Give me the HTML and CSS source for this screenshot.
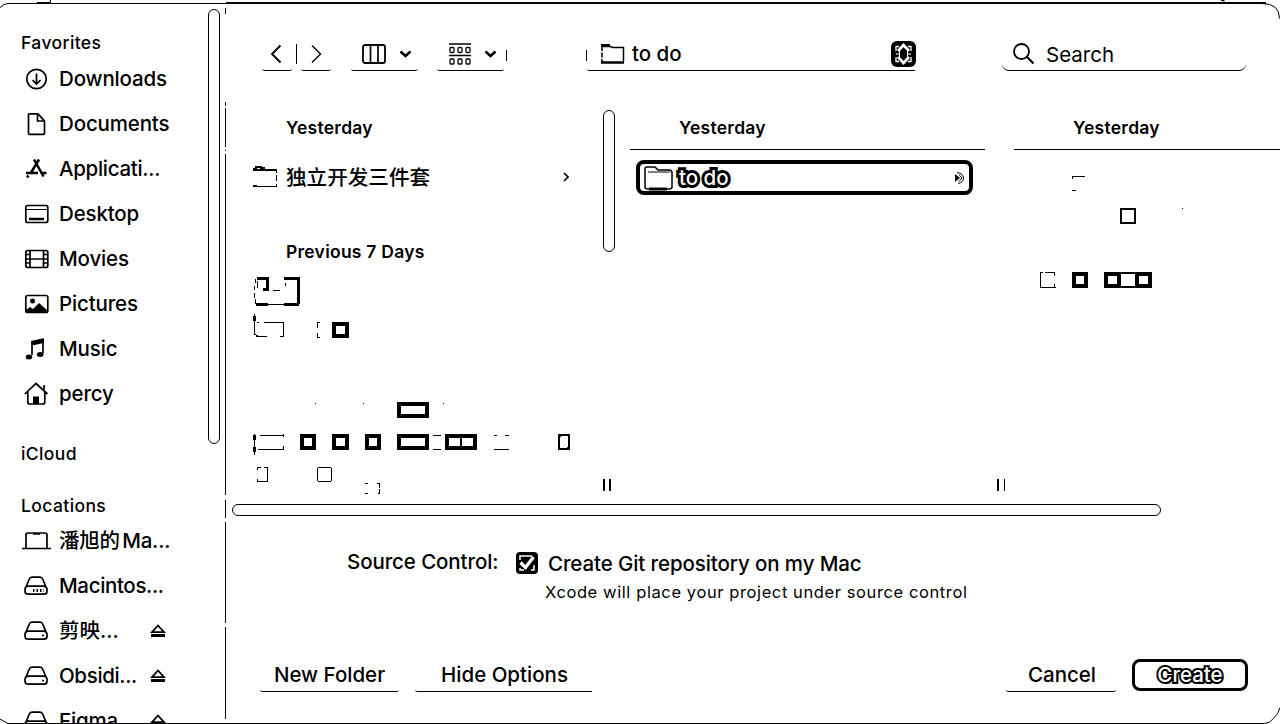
FILE: index.html
```html
<!DOCTYPE html>
<html lang="en">
<head>
<meta charset="utf-8">
<title>Save</title>
<link rel="stylesheet" href="styles.css">
</head>
<body>
<svg class="defs" aria-hidden="true">
  <symbol id="drive" viewBox="0 0 24 20"><path d="M5.2 3.2Q6 1.2 8 1.2h8q2 0 2.8 2l3.4 8.3M5.2 3.2L1.800 11.500M4 10.200h16q3 .4 3 3.600v1.400q0 3-3 3H4q-3 0-3-3v-1.400q0-3.200 3-3.600z"/></symbol>
  <symbol id="eject" viewBox="0 0 16 14"><path d="M2 8.200L8 1.500l6 6.700z" stroke-width="1.800"/><path d="M1 11.500h14" stroke-width="3"/></symbol>
  <symbol id="down" viewBox="0 0 13 8"><path d="M1.500 1.500l5 4.500 5-4.500" stroke-width="2.500"/></symbol>
</svg>
<div class="window">
  <aside class="sidebar">
    <nav class="places">
      <h2 class="heading favorites">Favorites</h2>
      <div class="place"><svg class="icon" viewBox="0 0 24 24"><circle cx="12.500" cy="12" r="9.700"/><path d="M12.500 6.500v10.500M8.500 13l4 4 4-4"/></svg><span class="name">Downloads</span></div>
      <div class="place"><svg class="icon" viewBox="0 0 24 24"><path d="M6 1.800h8l6.500 7v12.500q0 1-1 1h-14q-1 0-1-1V2.800q0-1 1.500-1zM13.500 2v7h7"/></svg><span class="name documents">Documents</span></div>
      <div class="place"><svg class="icon" viewBox="0 0 24 24"><path d="M10 2.500l2 3.500M15 2.500L6.500 16.500M12 6l7.500 13.500M2 16h12M17 16h5.500M4.500 18.500l-1.500 2" stroke-width="2.500"/></svg><span class="name applications">Applicati...</span></div>
      <div class="place"><svg class="icon" viewBox="0 0 24 24"><rect x="1.800" y="3.500" width="22" height="17" rx="2"/><path d="M2 7.500h21" stroke-width="1"/><path d="M5 17h15" stroke-width="2.500"/></svg><span class="name">Desktop</span></div>
      <div class="place"><svg class="icon" viewBox="0 0 24 24"><rect x="1.800" y="3.500" width="22" height="17" rx="2"/><path d="M6 4v16M19.500 4v16M6 12h13.500M2 7.500h4M2 12h4M2 16h4M19.500 7.500h4M19.500 12h4M19.500 16h4"/></svg><span class="name">Movies</span></div>
      <div class="place"><svg class="icon" viewBox="0 0 24 24"><rect x="1.800" y="3.500" width="22" height="17" rx="2"/><path class="solid" d="M2 18l4-3 3 2 6-6 8 7v3H2z"/><circle class="solid" cx="8.500" cy="9" r="2.500"/></svg><span class="name">Pictures</span></div>
      <div class="place"><svg class="icon" viewBox="0 0 24 24"><path d="M8 18V5l11-2.500V16"/><path class="solid" d="M7.200 4l12.600-2.800V6L8 8.500z"/><ellipse class="solid" cx="5" cy="20" rx="3.300" ry="2.500"/><ellipse class="solid" cx="16.200" cy="17.500" rx="3.300" ry="2.500"/></svg><span class="name">Music</span></div>
      <div class="place"><svg class="icon" viewBox="0 0 24 24"><path d="M.800 12L12 1.500 23.500 12M3.800 10v10q0 2 2 2h13q2 0 2-2V10M20 3v6"/><path class="solid" d="M9 22v-7.500h6V22z"/></svg><span class="name percy">percy</span></div>
      <h2 class="heading cloud">iCloud</h2>
      <h2 class="heading locations">Locations</h2>
      <div class="place"><svg class="icon laptop" viewBox="0 0 28 20"><path d="M4 17V4q0-2 2-2h17q2 0 2 2v13M0 17.500h29M11 3h7"/></svg><span class="name mac">潘旭的 Ma...</span></div>
      <div class="place"><svg class="icon drive"><use href="#drive"/><path d="M9 14.500h11" stroke-dasharray="1.500 2" stroke-width="3"/></svg><span class="name macintosh">Macintos...</span></div>
      <div class="place"><svg class="icon drive"><use href="#drive"/><path d="M18 14.500h2"/></svg><span class="name cjk">剪映...</span><svg class="eject"><use href="#eject"/></svg></div>
      <div class="place"><svg class="icon drive"><use href="#drive"/><path d="M18 14.500h2"/></svg><span class="name obsidian">Obsidi...</span><svg class="eject"><use href="#eject"/></svg></div>
      <div class="place"><svg class="icon drive"><use href="#drive"/></svg><span class="name">Figma</span><svg class="eject"><use href="#eject"/></svg></div>
    </nav>
    <div class="side-scroll"></div>
    <svg class="divider" width="1" height="724"><path d="M.5 8v6M.5 102v4M.5 108v39M.5 150v1M.5 154v341M.5 500v18M.5 522v101M.5 627v92"/></svg>
  </aside>
  <main class="main">
    <header class="toolbar">
      <div class="tool back"><svg width="12" height="20" viewBox="0 0 12 20"><path d="M10.500 1.500L2 10l8.500 8.500" stroke-width="1.900"/></svg></div>
      <i class="bar"></i>
      <div class="tool forward"><svg width="12" height="20" viewBox="0 0 12 20"><path d="M2 1.500l8.500 8.500L2 18.500" stroke-width="1.400"/></svg></div>
      <div class="tool view"><svg width="24" height="20" viewBox="0 0 24 20"><rect x="1" y="1" width="22" height="18" rx="2" stroke-width="1.800"/><path d="M8.500 1v18M16 1v18" stroke-width="1.700"/></svg><svg width="13" height="8"><use href="#down"/></svg></div>
      <div class="tool group"><svg width="22" height="22" viewBox="0 0 22 22"><path d="M0 1h22M0 12.500h22" stroke-width="1.700"/><g stroke-width="1.300"><rect x="1" y="4.500" width="4" height="5" rx="1"/><rect x="9" y="4.500" width="4" height="5" rx="1"/><rect x="17" y="4.500" width="4" height="5" rx="1"/><rect x="1" y="16" width="4" height="5" rx="1"/><rect x="9" y="16" width="4" height="5" rx="1"/><rect x="17" y="16" width="4" height="5" rx="1"/></g></svg><svg width="13" height="8"><use href="#down"/></svg></div>
      <i class="tick"></i>
      <i class="tick path-tick"></i>
      <div class="tool path"><svg width="24" height="22" viewBox="0 0 24 22"><path d="M1 3.500h8l3 1h10.500v14" stroke-width="1.500"/><path d="M0 2.500h9" stroke-width="3"/><path d="M1 4v4M1 9.500v5M1 16v3" stroke-width="1.500"/><path d="M0 19.500h23" stroke-width="2.500"/></svg><span class="path-name">to do</span><svg class="stepper" width="25" height="26" viewBox="0 0 25 26"><rect width="25" height="26" rx="6" class="solid"/><path class="white" d="M5 10V5.500h3M17 5.500h3V10M5 16v4.500h3M17 20.500h3V16" stroke-width="1.300"/><path class="white" d="M7 10l5.500-6 5.500 6M7 16l5.500 6 5.500-6" stroke-width="2.700"/><path class="white" d="M5 13h3M17 13h3M8.500 10v6M16.500 10v6" stroke-width="1"/></svg></div>
      <div class="tool search"><svg width="22" height="22" viewBox="0 0 22 22"><circle cx="8.500" cy="8.500" r="7.500" stroke-width="1.800"/><path d="M14 14l6.500 6.500" stroke-width="2.100"/></svg><span class="search-text">Search</span></div>
    </header>
    <section class="browser">
      <div class="column first">
        <h3 class="day">Yesterday</h3>
        <div class="entry"><svg width="24" height="22" viewBox="0 0 24 22" shape-rendering="crispEdges"><path d="M0 2.500h3V1h5v1h3v1.500" stroke-width="2"/><path d="M0 4h24" stroke-width="2"/><path d="M23.500 4v3M23.500 9v6M23.500 18v2.500H3"/><path d="M0 19.500h4" stroke-width="2"/></svg><span class="entry-name">独立开发三件套</span><svg class="chev" width="6" height="10" viewBox="0 0 6 10"><path d="M1 1l4 4-4 4" stroke-width="1.700"/></svg></div>
        <h3 class="day previous">Previous 7 Days</h3>
        <svg class="pieces" width="360" height="232" viewBox="240 265 360 232" shape-rendering="crispEdges">
          <path d="M255 279v4M254.500 286v4M254.500 293v5M255 299v4l3 1.500M257.500 281v7M273 290.500h7M285.500 283v3M262 304.500h30M263.500 322.500h20v14M256 336.500h11M280 336.500h3M257 322.500h2M254.500 314v20l3 2M319.500 322.500h-2v5M317.500 333v4h2M315 403.500h1M363 403.500h1M443 403.500h1M254.500 434v21M260 435.500h24M258 449.500h26M283.500 434v3M283.500 446v4M433 435.500h8M433 449.500h8M494 435.500h3M505 435.500h4M494 449.500h15M257.500 470v-2.500h3M264 467.500h3.500v14h-10v-3M365 483.500h3M377 483.500h2.500v4M365 493.500h3M379.500 489v4h-2"/>
          <path d="M257 278.500h10v11h-4M284 278.500h14.500v25M284 304h15M256 304h12" stroke-width="3"/>
          <path d="M254.500 316v5M254.500 435v5M254.500 447v5" stroke-width="3"/>
          <g stroke-width="4"><path d="M334 324h13v12h-13zM399 404h28v12h-28zM302 436h12v12h-12zM334 436h13v12h-13zM367 436h12v12h-12zM399 436h28v12h-28zM447 436h28v12h-28z"/></g>
          <path d="M461 436v12" stroke-width="2"/>
          <rect x="559" y="435" width="10" height="14" rx="3" stroke-width="2"/><path d="M558 435h12M558 449h12" stroke-width="2"/>
          <rect x="317.500" y="467.500" width="14" height="14" rx="2"/>
        </svg>
        <div class="col-scroll"></div>
        <div class="grip"></div>
      </div>
      <div class="column second">
        <h3 class="day">Yesterday</h3>
        <div class="selected"><svg width="29" height="27" viewBox="0 0 29 27"><path d="M3 3h8l3 3h11q3 0 3 3v14q0 2-3 2H4q-3 0-3-2V5q0-2 2-2z" stroke-width="1.500"/><path d="M4 8h22M5 24h18" stroke-width="1"/><path d="M5 25.500h18" stroke-width="2"/></svg><span class="outlined">to do</span><svg class="arrow" width="11" height="14" viewBox="0 0 11 14"><path class="solid" d="M1 3l5 4-5 4z"/><path d="M3 1.500q6.500 1 6.500 5.500T4 12.500M5 3.500l3 3.500-3 3.500"/></svg></div>
        <div class="grip"></div>
      </div>
      <div class="column third">
        <h3 class="day">Yesterday</h3>
        <svg class="pieces" width="160" height="130" viewBox="1030 165 160 130" shape-rendering="crispEdges">
          <path d="M1072.500 179v-2.500h12M1072 190.500h4M1182 208.500h1M1043 272.500h-2.500v15h15M1045 272.500h9.500v3M1054.500 284v3"/>
          <path d="M1121 209h14v14h-14z" stroke-width="1.500"/><path d="M1120 223h16" stroke-width="2"/>
          <path d="M1074 274h12v12h-12zM1106 274h13v12h-13zM1137 274h13v12h-13z" stroke-width="4"/><path d="M1119 273h18M1119 287h18" stroke-width="2"/>
        </svg>
      </div>
    </section>
    <div class="bottom-scroll"></div>
    <section class="options">
      <span class="label">Source Control:</span>
      <svg class="check" width="22" height="22" viewBox="0 0 22 22"><rect class="solid" width="22" height="22" rx="4"/><path class="white" d="M4 8V4h12M4 16v2h4M18 13v5h-3" stroke-width="1.500"/><path class="white" d="M4.500 10.500l5 5L17.500 5" stroke-width="3.200"/></svg>
      <div class="option-text"><span class="git">Create Git repository on my Mac</span><span class="note">Xcode will place your project under source control</span></div>
    </section>
    <footer class="footer">
      <div class="button new"><span>New Folder</span></div>
      <div class="button hide"><span>Hide Options</span></div>
      <div class="button cancel"><span>Cancel</span></div>
      <div class="create"><span class="outlined">Create</span></div>
    </footer>
  </main>
  <svg class="frame" width="1280" height="724"><path d="M0 7.500l4-3 4-1H226M1262 3.500q17.500 0 17.500 15M1279.500 708q0 4-6 10.500-4 5-9 5H8L0 719"/><path d="M226 3h1040" stroke-width="2"/><path d="M37 2.500h13.500V0M1221 .500h3v2h7"/></svg>
</div>
</body>
</html>
```
FILE: styles.css
```css
* { box-sizing: border-box; }
body { margin: 0; background: #fff; color: #000; font-family: Inter, "Noto Sans CJK SC", sans-serif; overflow: hidden; }
svg { display: block; flex: none; fill: none; stroke: #000; stroke-width: 1; }
.defs { position: absolute; width: 0; height: 0; }
.solid { fill: #000; stroke: none; }
.white { stroke: #fff; }
.window { position: relative; display: flex; width: 1280px; height: 724px; overflow: hidden; }
.frame { position: absolute; top: 0; left: 0; pointer-events: none; }
.sidebar { display: flex; width: 226px; height: 724px; flex: none; overflow: hidden; }
.places { width: 208px; padding: 30px 0 0 21px; flex: none; }
.heading { margin: 0; height: 26px; font-size: 17.5px; line-height: 26px; font-weight: 500; letter-spacing: .4px; white-space: nowrap; }
.cloud { margin-top: 25px; }
.locations { margin-top: 26px; height: 25px; }
.place { display: flex; align-items: center; height: 45px; padding-left: 3px; white-space: nowrap; }
.icon { width: 24px; height: 24px; margin-right: 11px; stroke-width: 1.7; overflow: visible; }
.laptop { width: 28px; height: 20px; margin-left: -2px; margin-right: 9px; }
.drive { height: 20px; }
.name { font-size: 20.5px; line-height: 26px; font-weight: 500; letter-spacing: -.15px; }
.applications { letter-spacing: -.3px; }
.macintosh, .obsidian { letter-spacing: -.35px; }
.mac { letter-spacing: -.2px; word-spacing: -3px; }
.cjk { letter-spacing: 0; }
.eject { position: absolute; left: 150px; width: 16px; height: 14px; }
.side-scroll { width: 12px; height: 435px; margin-top: 9px; border: 1px solid #000; border-radius: 6px; flex: none; }
.divider { margin-left: 5px; }
.main { display: flex; flex-direction: column; width: 1054px; flex: none; }
.toolbar { display: flex; height: 106px; padding-top: 37px; align-items: flex-start; }
.tool { display: flex; height: 34px; align-items: center; border-bottom: 1px solid #000; border-radius: 0 0 4px 4px / 0 0 2px 2px; flex: none; }
.back { width: 30px; margin-left: 36px; padding-left: 8px; }
.bar { width: 1px; height: 20px; margin: 7px 4px 0; background: #000; }
.forward { width: 30px; padding-left: 9px; }
.view { width: 67px; margin-left: 20px; padding-left: 11px; gap: 13px; }
.group { width: 67px; margin-left: 19px; padding-left: 12px; gap: 13px; }
.tick { width: 1px; height: 11px; margin: 13px 0 0 2px; background: #000; }
.path-tick { margin-left: 79px; }
.path { width: 328px; margin-left: 0; padding-left: 14px; border-bottom-right-radius: 0; }
.path-name { margin-left: 7px; font-size: 20.5px; font-weight: 500; }
.stepper { margin-left: auto; margin-right: -1px; }
.search { width: 244px; margin-left: 87px; padding-left: 11px; gap: 11px; border-radius: 7px; }
.search-text { margin-top: 2px; font-size: 20.5px; }
.browser { display: flex; height: 398px; }
.column { position: relative; height: 398px; flex: none; }
.first { width: 390px; }
.second { width: 394px; padding-left: 14px; }
.third { width: 270px; padding-left: 4px; }
.day { margin: 0; height: 44px; line-height: 44px; font-size: 17.5px; font-weight: 600; letter-spacing: .25px; white-space: nowrap; }
.first .day { padding-left: 60px; }
.second .day { width: 355px; padding-left: 49px; border-bottom: 1px solid #000; }
.third .day { padding-left: 59px; border-bottom: 1px solid #000; }
.entry { display: flex; height: 54px; align-items: center; padding-left: 27px; }
.entry-name { width: 277px; margin: -3px 0 0 9px; font-size: 20.6px; font-weight: 500; }
.first .previous { margin-top: 26px; }
.first .pieces { margin: -9px 0 0 14px; }
.third .pieces { margin: 15px 0 0 16px; }
.col-scroll { position: absolute; top: 4px; right: 1px; width: 12px; height: 142px; border: 1px solid #000; border-radius: 6px; }
.grip { position: absolute; top: 373px; right: 5px; width: 8px; height: 12px; border: solid #000; border-width: 0 2px; }
.second .grip { border-right-width: 1px; }
.selected { display: flex; align-items: center; width: 337px; height: 35px; margin: 10px 0 0 6px; padding-left: 4px; border: 4px solid #000; border-radius: 8px; }
.outlined { color: #fff; font-weight: 500; -webkit-text-stroke: 6px #000; paint-order: stroke fill; font-size: 20.5px; line-height: 26px; white-space: nowrap; }
.selected .outlined { margin-left: 6px; }
.arrow { margin-left: auto; margin-right: 4px; }
.bottom-scroll { width: 929px; height: 12px; margin-left: 6px; border: 1px solid #000; border-radius: 6px; flex: none; }
.options { display: flex; height: 124px; padding: 36px 0 0 121px; align-items: flex-start; white-space: nowrap; }
.label { width: 169px; margin-top: -3px; font-size: 20.5px; font-weight: 500; line-height: 26px; letter-spacing: -.1px; }
.option-text { display: flex; flex-direction: column; margin: -1px 0 0 7px; }
.git { padding-left: 3px; font-size: 20.5px; font-weight: 500; line-height: 26px; letter-spacing: -.1px; }
.note { margin-top: 3px; font-size: 16.5px; line-height: 24px; letter-spacing: .6px; }
.footer { display: flex; height: 84px; padding: 18px 0 0 34px; white-space: nowrap; }
.button { display: flex; justify-content: center; align-items: center; height: 34px; border-bottom: 1px solid #000; border-radius: 0 0 4px 4px / 0 0 2px 2px; font-size: 20.5px; font-weight: 500; }
.new { width: 139px; }
.hide { width: 177px; margin-left: 16px; padding-left: 2px; border-bottom-right-radius: 0; }
.cancel { width: 110px; margin-left: 414px; padding-left: 2px; }
.create { display: flex; justify-content: center; align-items: center; width: 116px; height: 32px; margin: 1px 0 0 16px; border: 3px solid #000; border-radius: 8px; }
.create .outlined { -webkit-text-stroke-width: 4px; }
```
